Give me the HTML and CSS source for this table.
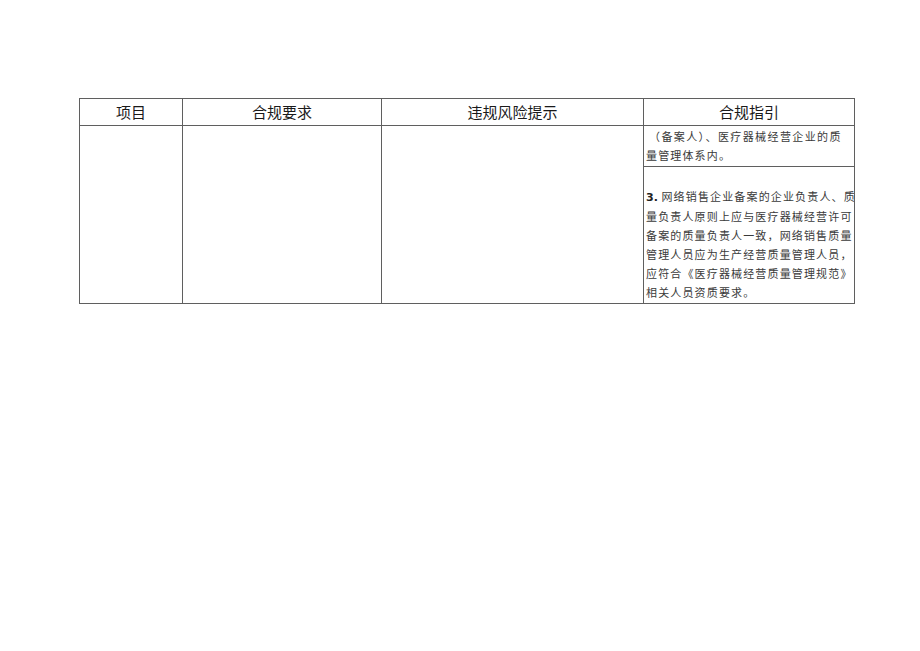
FILE: index.html
```html
<!DOCTYPE html>
<html lang="zh">
<head>
<meta charset="utf-8">
<link rel="stylesheet" href="styles.css">
</head>
<body>
<div class="page">
  <table class="grid">
    <colgroup>
      <col class="c1"><col class="c2"><col class="c3"><col class="c4">
    </colgroup>
    <thead>
      <tr class="head">
        <th>项目</th>
        <th>合规要求</th>
        <th>违规风险提示</th>
        <th>合规指引</th>
      </tr>
    </thead>
    <tbody>
      <tr class="r1">
        <td rowspan="2"></td>
        <td rowspan="2"></td>
        <td rowspan="2"></td>
        <td class="guide"><span class="ind">（备案人）、医疗器械经营企业的质</span><br>量管理体系内。</td>
      </tr>
      <tr class="r2">
        <td class="guide"><br><span class="num">3.</span> 网络销售企业备案的企业负责人、质<br>量负责人原则上应与医疗器械经营许可<br>备案的质量负责人一致，网络销售质量<br>管理人员应为生产经营质量管理人员，<br>应符合《医疗器械经营质量管理规范》<br>相关人员资质要求。</td>
      </tr>
    </tbody>
  </table>
</div>
</body>
</html>
```

FILE: styles.css
```css
html, body {
  margin: 0;
  padding: 0;
  background: #ffffff;
}

.page {
  padding: 98px 0 0 79px;
}

.grid {
  border-collapse: collapse;
  table-layout: fixed;
  width: 775px;
  font-family: "Noto Sans CJK SC", "Noto Sans", sans-serif;
  color: #111;
}

.c1 { width: 103px; }
.c2 { width: 199px; }
.c3 { width: 262px; }
.c4 { width: 211px; }

.grid th,
.grid td {
  border: 1px solid #5f5f5f;
  padding: 0;
  vertical-align: top;
}

.head th {
  height: 26px;
  font-weight: normal;
  font-size: 15px;
  line-height: 26px;
  vertical-align: middle;
  text-align: center;
  color: #1a1a1a;
}

.guide {
  font-size: 11px;
  line-height: 19px;
  letter-spacing: 1.15px;
  padding: 1px 1px 0 2px !important;
  color: #3a3a3a;
  white-space: nowrap;
  overflow: hidden;
}

.r1 .guide {
  height: 39px;
}

.r2 .guide {
  height: 135px;
}

.ind {
  padding-left: 3px;
  letter-spacing: 1.4px;
}

.num {
  font-family: "DejaVu Sans", sans-serif;
  font-weight: bold;
  letter-spacing: 0;
  color: #222;
}
```
